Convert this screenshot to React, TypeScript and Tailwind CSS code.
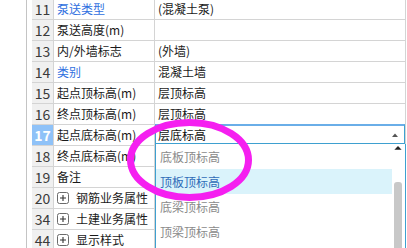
import React from 'react';

type Row = {
  no: string;
  name: string;
  value?: string;
  link?: boolean;
  active?: boolean;
  group?: boolean;
};

const ROWS: Row[] = [
  { no: '11', name: '泵送类型', value: '(混凝土泵)', link: true },
  { no: '12', name: '泵送高度(m)', value: '' },
  { no: '13', name: '内/外墙标志', value: '(外墙)' },
  { no: '14', name: '类别', value: '混凝土墙', link: true },
  { no: '15', name: '起点顶标高(m)', value: '层顶标高' },
  { no: '16', name: '终点顶标高(m)', value: '层顶标高' },
  { no: '17', name: '起点底标高(m)', value: '层底标高', active: true },
  { no: '18', name: '终点底标高(m)', value: '' },
  { no: '19', name: '备注', value: '' },
  { no: '20', name: '钢筋业务属性', group: true },
  { no: '34', name: '土建业务属性', group: true },
  { no: '44', name: '显示样式', group: true },
];

const OPTIONS = ['底板顶标高', '顶板顶标高', '底梁顶标高', '顶梁顶标高'];

function PlusBox() {
  return (
    <svg width="12" height="12" viewBox="0 0 12 12" className="shrink-0">
      <rect x="0.5" y="0.5" width="11" height="11" rx="2" fill="white" stroke="#6b6b6b" />
      <path d="M3 6h6M6 3v6" stroke="#333" strokeWidth="1.1" />
    </svg>
  );
}

function Dropdown() {
  return (
    <div className="absolute left-0 top-[-1px] z-10 w-[251px]">
      <div className="flex h-[20px] w-[250px] items-center border-x border-b border-t-2 border-x-[#3ea0d0] border-b-[#3ea0d0] border-t-[#6aaee8] bg-white pl-[2px] pr-[6px]">
        <span className="flex-1 text-[12px] text-[#111]">层底标高</span>
        <svg width="6" height="4" viewBox="0 0 6 4">
          <path d="M0 4L3 0.5L6 4Z" fill="#555" />
        </svg>
      </div>
      <div className="flex h-[110px] border-x border-[#3ea0d0] bg-white">
        <div className="flex-1">
          {OPTIONS.map((o, i) => (
            <div
              key={o}
              className={`flex h-[25px] items-center pl-[4px] text-[12px] ${
                i === 1 ? 'bg-[#daf3fb] text-[#2f6cb8]' : 'text-[#8a8a8a]'
              }`}
            >
              {o}
            </div>
          ))}
        </div>
        <div className="flex w-[13px] flex-col items-start pl-[2px] pt-[2px]">
          <svg width="8" height="4" viewBox="0 0 8 4">
            <path d="M0 4L4 0L8 4Z" fill="#222" />
          </svg>
          <div className="mt-[32px] h-[80px] w-[8px] rounded-t-[3px] bg-[#c8c8c8]" />
        </div>
      </div>
    </div>
  );
}

export default function App() {
  return (
    <div
      className="relative flex h-[248px] w-[407px] overflow-hidden bg-white"
      style={{ fontFamily: '"Noto Sans CJK SC", "Noto Sans", sans-serif' }}
    >
      <div className="w-[26px] shrink-0" />
      <div className="w-px shrink-0 bg-[#c4c4c4]" />
      <div className="w-[5px] shrink-0" />
      <div className="mt-[-1px] w-[374px] shrink-0 border-r border-[#d4d4d4]">
        {ROWS.map((r) => (
          <div key={r.no} className="flex h-[21px] border-b border-[#d4d4d4]">
            <div
              className={`flex w-[22px] shrink-0 items-center justify-center border-r border-[#d4d4d4] text-[14px] ${
                r.active ? 'bg-[#8fc2f8] font-bold text-white' : 'bg-[#f0f0f0] text-[#3a3a3a]'
              }`}
            >
              {r.no}
            </div>
            <div
              className={`flex w-[101px] shrink-0 items-center gap-[7px] border-r border-[#d4d4d4] pl-[3px] text-[12px] ${
                r.link ? 'text-[#2f6fe0]' : 'text-[#1a1a1a]'
              }`}
            >
              {r.group && <PlusBox />}
              <span className="whitespace-nowrap">{r.name}</span>
            </div>
            <div className="relative flex flex-1 items-center pl-[3px] text-[12px] text-[#1a1a1a]">
              {r.active ? <Dropdown /> : r.value}
            </div>
          </div>
        ))}
      </div>
      <svg className="pointer-events-none absolute left-0 top-0 z-20" width="407" height="248">
        <ellipse cx="189.5" cy="160" rx="59" ry="37.5" fill="none" stroke="#f51ff0" strokeWidth="7" />
      </svg>
    </div>
  );
}
